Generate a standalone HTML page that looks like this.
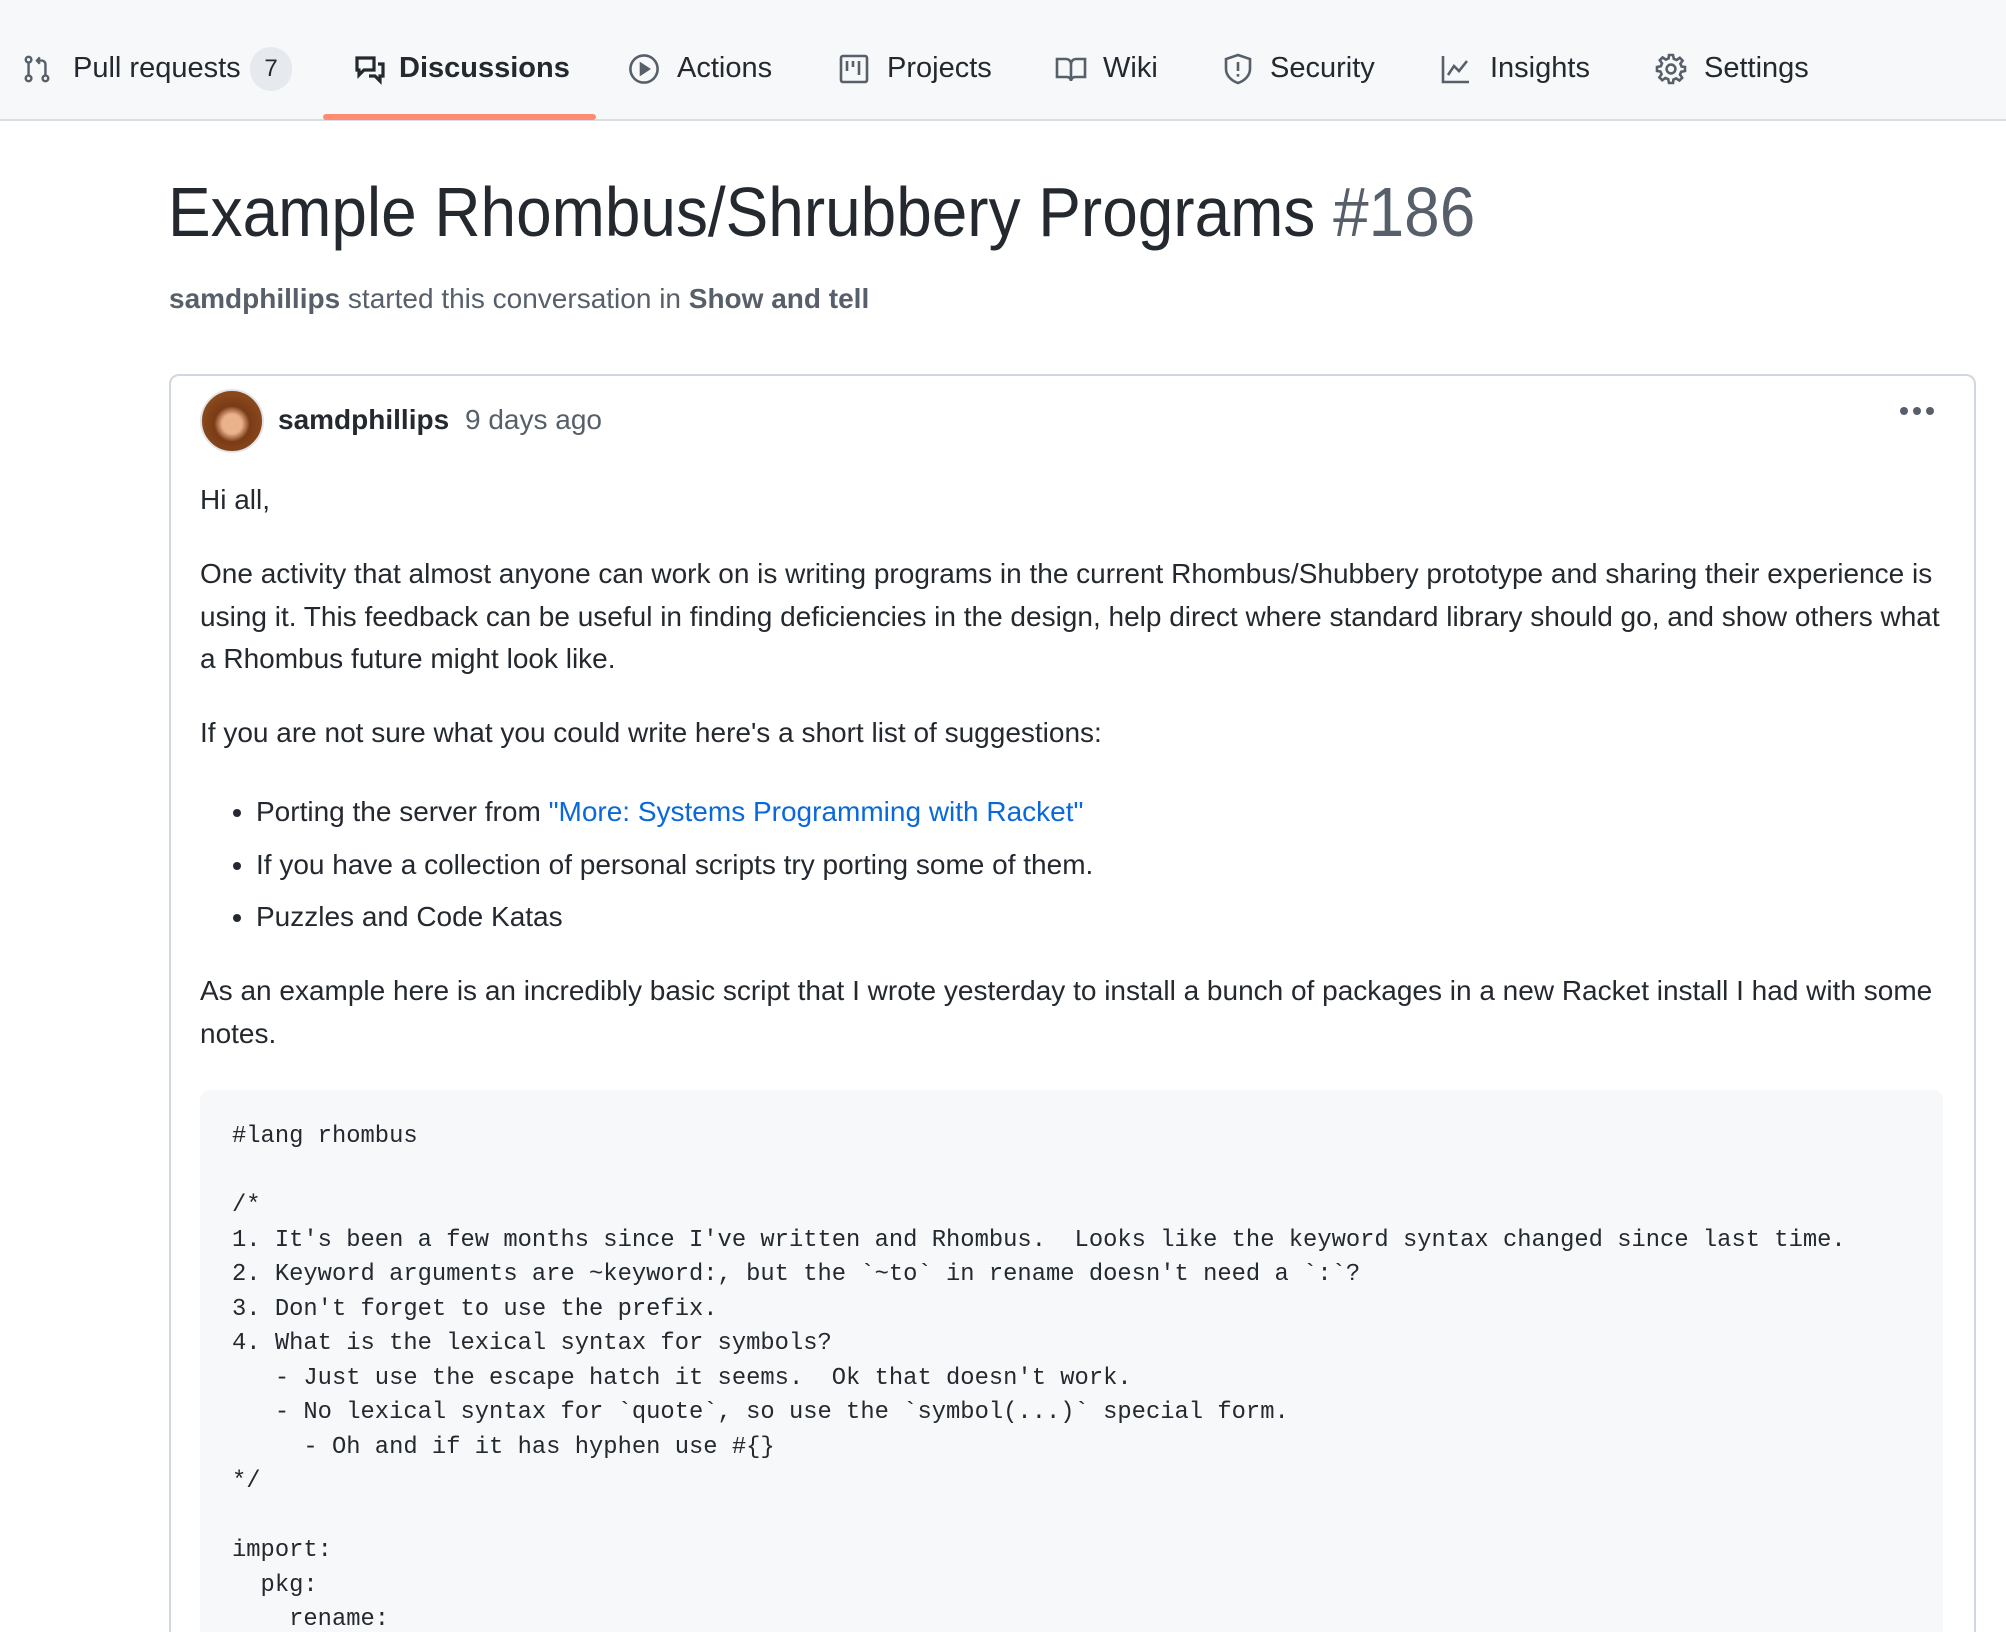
<!DOCTYPE html>
<html style="height:1632px;overflow:hidden"><head><meta charset="utf-8"><style>
*{box-sizing:border-box;margin:0;padding:0}
body{width:2006px;height:1632px;overflow:hidden;background:#fff;font-family:"Liberation Sans",Arial,sans-serif;color:#24292f;position:relative}
.nav{position:absolute;left:0;top:0;width:2006px;height:121px;background:#f6f8fa;border-bottom:2px solid #d8dee4}
.it{position:absolute;top:48px;font-size:29px;line-height:40px;color:#24292f;white-space:nowrap}
.ic{position:absolute;top:53px}
.ic svg{display:block}
.cnt{position:absolute;left:250px;top:47px;width:42px;height:44px;border-radius:22px;background:#e6e9ed;font-size:24px;text-align:center;line-height:44px}
.ul{position:absolute;left:323px;top:114px;width:273px;height:6px;background:#fd8c73;border-radius:3px}
h1{position:absolute;left:168px;top:170px;font-size:70px;font-weight:400;line-height:84px;color:#24292f;white-space:nowrap;transform:scaleX(0.913);transform-origin:0 0}
h1 span{color:#57606a}
.sub{position:absolute;left:169px;top:279px;font-size:28px;line-height:40px;color:#57606a}
.sub b{color:#57606a}
.box{position:absolute;left:169px;top:374px;width:1807px;height:1258px;border:2px solid #d0d7de;border-bottom:none;border-radius:10px 10px 0 0}
.av{position:absolute;left:200px;top:389px;width:64px;height:64px;border-radius:50%;background:radial-gradient(circle at 50% 55%,#e9b28a 0 22%,#7a3a16 40%,#8a4a1c 70%,#5a2a10);border:2px solid #e1e4e8}
.nm{position:absolute;left:278px;top:400px;font-size:28px;line-height:40px;font-weight:700}
.ago{position:absolute;left:465px;top:400px;font-size:28px;line-height:40px;color:#57606a}
.dots{position:absolute;left:1900px;top:402px}
.dots i{display:inline-block;width:8px;height:8px;border-radius:50%;background:#57606a;margin-right:5px}
.body{position:absolute;left:200px;top:479px;width:1745px;font-size:28px;line-height:42.5px}
.body p{margin-bottom:31.5px}
.body ul{margin:0 0 31.5px 56px;padding-top:5px}
.body li{margin-top:10px}
.body li:first-child{margin-top:0}
a{color:#0969da;text-decoration:none}
pre{position:absolute;left:200px;top:1090px;width:1743px;height:542px;overflow:hidden;background:#f6f8fa;border-radius:10px 10px 0 0;padding:30px 32px;font-family:"Liberation Mono",monospace;font-size:23.8px;line-height:34.5px;color:#24292f}
</style></head><body>
<div class="nav">
<div class="ic" style="left:22px"><svg width="30" height="32" viewBox="0 0 16 16" fill="none" stroke="#57606a" stroke-width="1.3"><circle cx="3.5" cy="3" r="1.5"/><circle cx="3.5" cy="13" r="1.5"/><circle cx="12.5" cy="13" r="1.5"/><path d="M3.5 4.5v7M12.5 11.5V5.5a2 2 0 0 0-2-2H8M9.5 1.8L8 3.5l1.5 1.7"/></svg></div>
<div class="it" style="left:73px">Pull requests</div>
<div class="cnt">7</div>
<div class="ic" style="left:354px"><svg width="32" height="32" viewBox="0 0 16 16" fill="none" stroke="#24292f" stroke-width="1.6"><path d="M1.5 2.5h8.5v6H5L2.5 11V8.5h-1z"/><path d="M12 5.5h2.5v6H13v2.5l-2.5-2.5H7.5"/></svg></div>
<div class="it" style="left:399px;font-weight:700">Discussions</div>
<div class="ul"></div>
<div class="ic" style="left:628px"><svg width="32" height="32" viewBox="0 0 16 16" fill="none" stroke="#57606a" stroke-width="1.3"><circle cx="8" cy="8" r="6.8"/><path d="M6.5 5.5v5l3.8-2.5z" fill="#57606a"/></svg></div>
<div class="it" style="left:677px">Actions</div>
<div class="ic" style="left:838px"><svg width="32" height="32" viewBox="0 0 16 16" fill="none" stroke="#57606a" stroke-width="1.3"><rect x="1.5" y="1.5" width="13" height="13" rx="1"/><path d="M4.5 4v5M7.5 4v3M10.5 4v7"/></svg></div>
<div class="it" style="left:887px">Projects</div>
<div class="ic" style="left:1055px"><svg width="32" height="32" viewBox="0 0 16 16" fill="none" stroke="#57606a" stroke-width="1.3"><path d="M1 3h4.5A2.5 2.5 0 0 1 8 5.5v8.5a2 2 0 0 0-2-2H1zM15 3h-4.5A2.5 2.5 0 0 0 8 5.5v8.5a2 2 0 0 1 2-2h5z"/></svg></div>
<div class="it" style="left:1103px">Wiki</div>
<div class="ic" style="left:1222px"><svg width="32" height="32" viewBox="0 0 16 16" fill="none" stroke="#57606a" stroke-width="1.3"><path d="M8 1l6 2v5c0 3.5-3 6-6 7-3-1-6-3.5-6-7V3z"/><path d="M8 4.5v4.5M8 10.5v1.3"/></svg></div>
<div class="it" style="left:1270px">Security</div>
<div class="ic" style="left:1440px"><svg width="32" height="32" viewBox="0 0 16 16" fill="none" stroke="#57606a" stroke-width="1.3"><path d="M1.5 1.5v13h13M4 11l3-4.5 2.5 2.5 4-5"/></svg></div>
<div class="it" style="left:1490px">Insights</div>
<div class="ic" style="left:1655px"><svg width="32" height="32" viewBox="0 0 16 16" fill="none" stroke="#57606a" stroke-width="1.3"><circle cx="8" cy="8" r="2.2"/><path d="M7 1h2l.4 1.9 1.4.6 1.6-1.1 1.4 1.4-1.1 1.6.6 1.4L15 7v2l-1.9.4-.6 1.4 1.1 1.6-1.4 1.4-1.6-1.1-1.4.6L9 15H7l-.4-1.9-1.4-.6-1.6 1.1-1.4-1.4 1.1-1.6-.6-1.4L1 9V7l1.9-.4.6-1.4-1.1-1.6 1.4-1.4 1.6 1.1 1.4-.6z"/></svg></div>
<div class="it" style="left:1704px">Settings</div>
</div>
<h1>Example Rhombus/Shrubbery Programs <span>#186</span></h1>
<div class="sub"><b>samdphillips</b> started this conversation in <b>Show and tell</b></div>
<div class="box"></div>
<div class="av"></div>
<div class="nm">samdphillips</div>
<div class="ago">9 days ago</div>
<div class="dots"><i></i><i></i><i></i></div>
<div class="body">
<p>Hi all,</p>
<p>One activity that almost anyone can work on is writing programs in the current Rhombus/Shubbery prototype and sharing their experience is using it. This feedback can be useful in finding deficiencies in the design, help direct where standard library should go, and show others what a Rhombus future might look like.</p>
<p>If you are not sure what you could write here's a short list of suggestions:</p>
<ul>
<li>Porting the server from <a>"More: Systems Programming with Racket"</a></li>
<li>If you have a collection of personal scripts try porting some of them.</li>
<li>Puzzles and Code Katas</li>
</ul>
<p>As an example here is an incredibly basic script that I wrote yesterday to install a bunch of packages in a new Racket install I had with some notes.</p>
</div>
<pre>#lang rhombus

/*
1. It's been a few months since I've written and Rhombus.  Looks like the keyword syntax changed since last time.
2. Keyword arguments are ~keyword:, but the `~to` in rename doesn't need a `:`?
3. Don't forget to use the prefix.
4. What is the lexical syntax for symbols?
   - Just use the escape hatch it seems.  Ok that doesn't work.
   - No lexical syntax for `quote`, so use the `symbol(...)` special form.
     - Oh and if it has hyphen use #{}
*/

import:
  pkg:
    rename:</pre>
</body></html>
